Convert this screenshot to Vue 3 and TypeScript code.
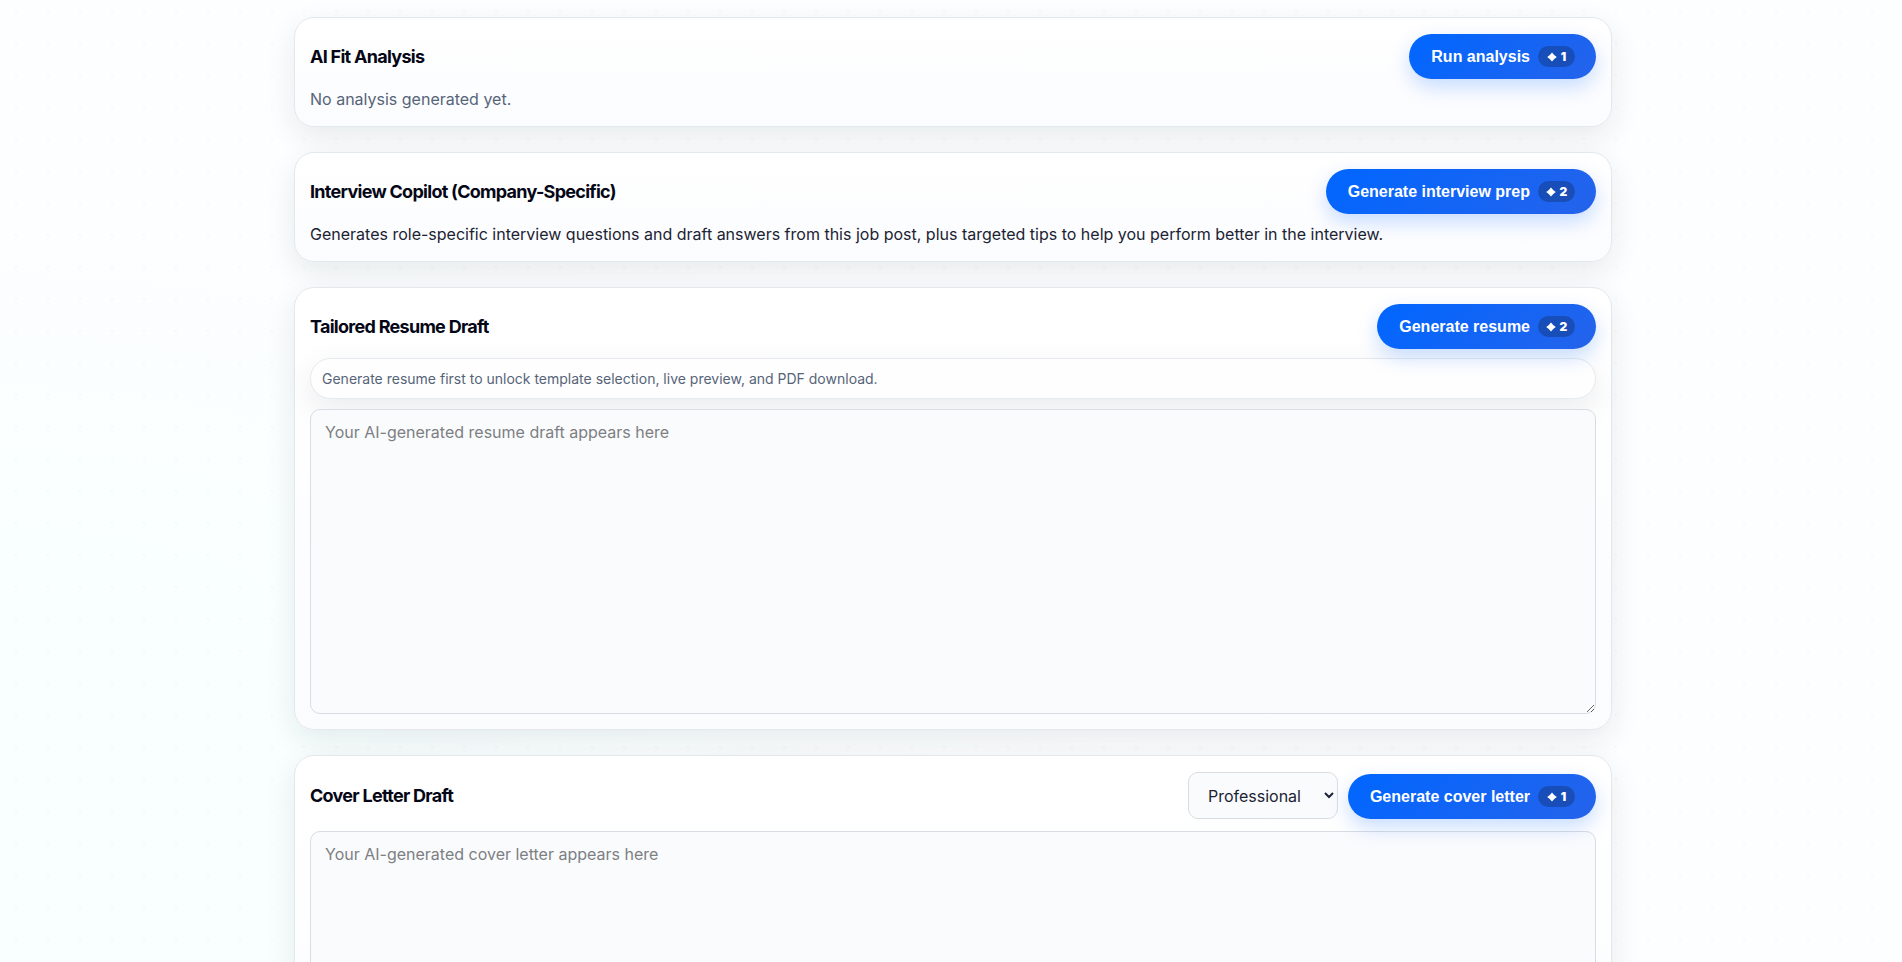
<script setup lang="ts">
import { ref } from 'vue'

const tones: string[] = ['Professional', 'Friendly', 'Confident', 'Concise']
const tone = ref<string>('Professional')
const resumeDraft = ref<string>('')
const coverLetter = ref<string>('')
</script>

<template>
  <main class="page">
    <section class="card">
      <header class="head">
        <h2>AI Fit Analysis</h2>
        <button class="primary" type="button">
          Run analysis
          <span class="cost">
            <svg class="gem" viewBox="0 0 10 10" aria-hidden="true"><path d="M5 0.4Q6.9 3.1 9.8 5Q6.9 6.9 5 9.6Q3.1 6.9 0.2 5Q3.1 3.1 5 0.4Z" /></svg>
            <span>1</span>
          </span>
        </button>
      </header>
      <p class="muted">No analysis generated yet.</p>
    </section>

    <section class="card">
      <header class="head">
        <h2>Interview Copilot (Company-Specific)</h2>
        <button class="primary" type="button">
          Generate interview prep
          <span class="cost">
            <svg class="gem" viewBox="0 0 10 10" aria-hidden="true"><path d="M5 0.4Q6.9 3.1 9.8 5Q6.9 6.9 5 9.6Q3.1 6.9 0.2 5Q3.1 3.1 5 0.4Z" /></svg>
            <span>2</span>
          </span>
        </button>
      </header>
      <p>
        Generates role-specific interview questions and draft answers from this job post, plus targeted tips to help you
        perform better in the interview.
      </p>
    </section>

    <section class="card">
      <header class="head">
        <h2 id="resume-title">Tailored Resume Draft</h2>
        <button class="primary" type="button">
          Generate resume
          <span class="cost">
            <svg class="gem" viewBox="0 0 10 10" aria-hidden="true"><path d="M5 0.4Q6.9 3.1 9.8 5Q6.9 6.9 5 9.6Q3.1 6.9 0.2 5Q3.1 3.1 5 0.4Z" /></svg>
            <span>2</span>
          </span>
        </button>
      </header>
      <div class="hint">Generate resume first to unlock template selection, live preview, and PDF download.</div>
      <textarea
        v-model="resumeDraft"
        class="draft"
        aria-labelledby="resume-title"
        placeholder="Your AI-generated resume draft appears here"
      ></textarea>
    </section>

    <section class="card">
      <header class="head">
        <h2 id="cover-title">Cover Letter Draft</h2>
        <div class="actions">
          <select v-model="tone" class="tone" aria-label="Tone">
            <option v-for="name in tones" :key="name" :value="name">{{ name }}</option>
          </select>
          <button class="primary" type="button">
            Generate cover letter
            <span class="cost">
              <svg class="gem" viewBox="0 0 10 10" aria-hidden="true"><path d="M5 0.4Q6.9 3.1 9.8 5Q6.9 6.9 5 9.6Q3.1 6.9 0.2 5Q3.1 3.1 5 0.4Z" /></svg>
              <span>1</span>
            </span>
          </button>
        </div>
      </header>
      <textarea
        v-model="coverLetter"
        class="draft spaced"
        aria-labelledby="cover-title"
        placeholder="Your AI-generated cover letter appears here"
      ></textarea>
    </section>
  </main>
</template>

<style>
html,
body {
  height: 100%;
}

body {
  background-color: #fdfeff;
  background-image:
    radial-gradient(circle, rgba(15, 23, 42, 0.03) 1px, transparent 1px),
    radial-gradient(ellipse 60% 75% at 0% 85%, #f9ffff 30%, rgba(249, 255, 255, 0));
  background-size:
    32px 32px,
    100% 100%;
  background-position:
    0 -5px,
    0 0;
  scrollbar-width: none;
}

html {
  scrollbar-width: none;
}
</style>

<style scoped>
.page {
  box-sizing: border-box;
  display: flex;
  flex-direction: column;
  gap: 25px;
  max-width: 1322px;
  margin: 0 auto;
  padding: 17px 0 17px 4px;
  color: #1b2333;
  font-family: Inter, "Liberation Sans", sans-serif;
  font-size: 16px;
  line-height: 24px;
}

.card {
  padding: 16px 15px 15px;
  border: 1px solid #e3e8ec;
  border-radius: 20px;
  background: linear-gradient(180deg, #ffffff, #fbfcfe);
  box-shadow: 0 10px 30px rgba(15, 32, 32, 0.09);
}

.head {
  display: flex;
  align-items: center;
  justify-content: space-between;
}

h2 {
  margin: 0;
  color: #050716;
  font-size: 18px;
  font-weight: 700;
  letter-spacing: -0.04em;
}

p {
  margin: 8px 0 0;
}

.muted {
  color: #566479;
}

.actions {
  display: flex;
  align-items: flex-end;
  gap: 10px;
}

.primary {
  display: flex;
  align-items: center;
  gap: 8px;
  height: 45px;
  padding: 0 21px 0 22px;
  border: 0;
  border-radius: 23px;
  background: linear-gradient(135deg, #0066ff, #2563eb);
  box-shadow: 0 8px 20px rgba(0, 102, 255, 0.22);
  color: #ffffff;
  font-family: "Liberation Sans", Arial, sans-serif;
  font-size: 16px;
  font-weight: 700;
  cursor: pointer;
}

.cost {
  box-sizing: border-box;
  display: flex;
  align-items: center;
  justify-content: center;
  gap: 4px;
  width: 37px;
  height: 21px;
  border-radius: 11px;
  background: rgba(15, 23, 42, 0.28);
  font-family: Inter, "Liberation Sans", sans-serif;
  font-size: 12px;
  font-weight: 900;
}

.gem {
  width: 10px;
  height: 10px;
  fill: currentColor;
}

.hint {
  margin-top: 9px;
  padding: 9px 11px;
  border: 1px solid #e6eaee;
  border-radius: 21px;
  background: #fefefe;
  box-shadow: 0 10px 30px rgba(15, 23, 42, 0.08);
  color: #566479;
  font-size: 14px;
  line-height: 21px;
}

.draft {
  box-sizing: border-box;
  display: block;
  width: 100%;
  height: 305px;
  margin: 10px 0 0;
  padding: 10px 14px;
  border: 1px solid #d9dde3;
  border-radius: 10px;
  background: #fafbfd;
  color: #1b2333;
  font: inherit;
  resize: vertical;
}

.spaced {
  margin-top: 12px;
}

.draft::placeholder {
  color: #7d7f83;
}

.tone {
  width: 150px;
  height: 47px;
  padding: 0 0 0 15px;
  border: 1px solid #d9dde3;
  border-radius: 10px;
  background: #fafbfd;
  color: #1b2333;
  font: inherit;
}
</style>
